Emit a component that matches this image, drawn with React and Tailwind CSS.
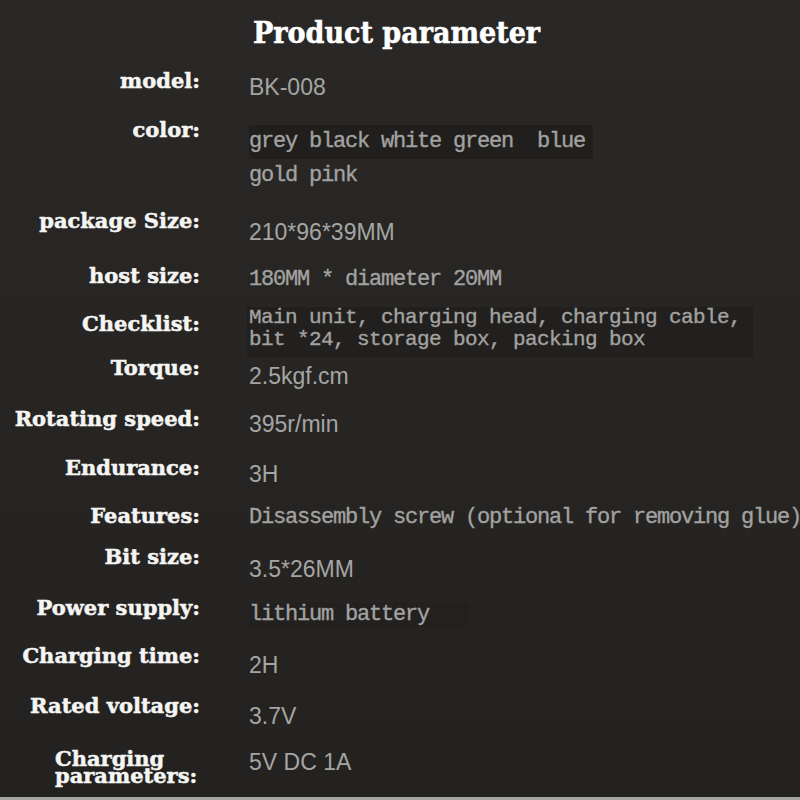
import React from "react";

const serif = "font-['DejaVu_Serif','Liberation_Serif',serif] font-bold text-[21px] text-[#f5f5f3] [-webkit-text-stroke:0.5px_#f5f5f3]";
const label = `${serif} text-right leading-[28px] whitespace-nowrap`;
const mono = "font-['Liberation_Mono',monospace] text-[#a2a2a0] [-webkit-text-stroke:0.35px_#a2a2a0]";
const sans = "font-['Liberation_Sans',sans-serif] text-[23px] leading-[28px] text-[#a5a5a3]";

const rows = [
  { name: "model:", h: 49, vt: 6, value: <span className={sans}>BK-008</span> },
  {
    name: "color:",
    h: 91,
    vt: 9,
    value: (
      <div className={`${mono} text-[22px] tracking-[-1.2px] leading-[34px]`}>
        <div className="inline-block bg-[#211f1e] pr-2">grey black white green&nbsp; blue</div>
        <div>gold pink</div>
      </div>
    ),
  },
  { name: "package Size:", h: 55, vt: 11, value: <span className={sans}>210*96*39MM</span> },
  {
    name: "host size:",
    h: 48,
    vt: 5,
    value: <span className={`${mono} text-[22px] tracking-[-1.2px] leading-[24px]`}>180MM * diameter 20MM</span>,
  },
  {
    name: "Checklist:",
    h: 44,
    vt: -3,
    value: (
      <div className={`${mono} text-[21px] tracking-[-0.6px] leading-[22px] bg-[#22201f] w-[506px] -ml-[2px] pl-[2px] pb-[6px]`}>
        <div>Main unit, charging head, charging cable,</div>
        <div>bit *24, storage box, packing box</div>
      </div>
    ),
  },
  { name: "Torque:", h: 51, vt: 8, value: <span className={sans}>2.5kgf.cm</span> },
  { name: "Rotating speed:", h: 49, vt: 5, value: <span className={sans}>395r/min</span> },
  { name: "Endurance:", h: 48, vt: 6, value: <span className={sans}>3H</span> },
  {
    name: "Features:",
    h: 41,
    vt: 3,
    value: (
      <span className={`${mono} text-[22px] tracking-[-1.2px] leading-[24px] whitespace-nowrap`}>
        Disassembly screw (optional for removing glue)
      </span>
    ),
  },
  { name: "Bit size:", h: 51, vt: 12, value: <span className={sans}>3.5*26MM</span> },
  {
    name: "Power supply:",
    h: 48,
    vt: 8,
    value: (
      <span className={`${mono} text-[22px] tracking-[-1.2px] leading-[24px] inline-block bg-[#222120] pr-10`}>
        lithium battery
      </span>
    ),
  },
  { name: "Charging time:", h: 50, vt: 9, value: <span className={sans}>2H</span> },
  { name: "Rated voltage:", h: 58, vt: 10, value: <span className={sans}>3.7V</span> },
];

export default function App() {
  return (
    <div className="w-[800px] h-[800px] overflow-hidden bg-[#272624] flex flex-col">
      <div className="h-[797px] shrink-0 bg-gradient-to-b from-[#292826] via-[#262523] to-[#232220] flex flex-col">
        <div className="h-[67px] shrink-0 pt-[13px] pl-[253px]">
          <h1 className="inline-block origin-left scale-x-90 whitespace-nowrap font-['DejaVu_Serif','Liberation_Serif',serif] font-bold text-[30px] leading-[40px] text-white [-webkit-text-stroke:0.6px_#ffffff]">
            Product parameter
          </h1>
        </div>
        {rows.map((r, i) => (
          <div key={i} className="shrink-0 grid grid-cols-[200px_1fr] gap-x-[49px]" style={{ height: r.h }}>
            <div className={label}>{r.name}</div>
            <div style={{ marginTop: r.vt }}>{r.value}</div>
          </div>
        ))}
        <div className="shrink-0 grid grid-cols-[200px_1fr] gap-x-[49px]">
          <div className={`${serif} leading-[17px] text-left pl-[55px] whitespace-nowrap`}>
            <div>Charging</div>
            <div>parameters:</div>
          </div>
          <div className="-mt-[2px]">
            <span className={sans}>5V DC 1A</span>
          </div>
        </div>
      </div>
      <div className="h-[3px] shrink-0 bg-[#a5a5a3]" />
    </div>
  );
}
